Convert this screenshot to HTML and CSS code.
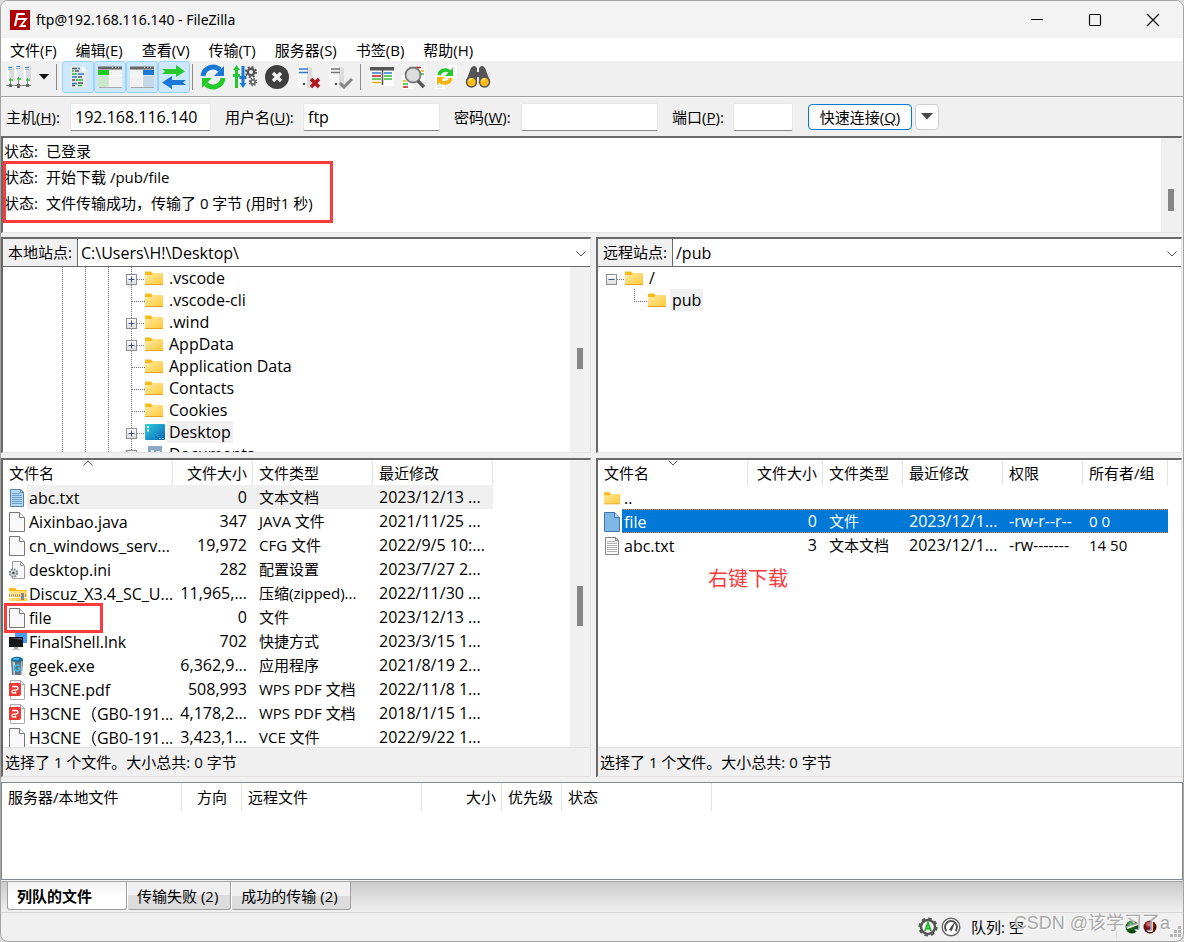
FILE: index.html
```html
<!DOCTYPE html>
<html lang="zh-CN">
<head>
<meta charset="utf-8">
<title>ftp@192.168.116.140 - FileZilla</title>
<link rel="stylesheet" href="styles.css">
</head>
<body>
<svg class="defs" aria-hidden="true">
  <defs>
    <linearGradient id="gFolder" x1="0" y1="0" x2="1" y2="1"><stop offset="0" stop-color="#ffe9a2"/><stop offset="1" stop-color="#ffc937"/></linearGradient>
    <linearGradient id="gDesk" x1="0" y1="0" x2="1" y2="1"><stop offset="0" stop-color="#2fd0dc"/><stop offset="1" stop-color="#0a62b8"/></linearGradient>
    <linearGradient id="gBox" x1="0" y1="0" x2="0" y2="1"><stop offset="0" stop-color="#fff"/><stop offset="1" stop-color="#dcdcdc"/></linearGradient>
    <linearGradient id="gSrv" x1="0" y1="0" x2="1" y2="0"><stop offset="0" stop-color="#f8f8f8"/><stop offset="1" stop-color="#cfcfcf"/></linearGradient>
    <radialGradient id="gGreen" cx=".4" cy=".3" r=".7"><stop offset="0" stop-color="#8fc98f"/><stop offset=".4" stop-color="#1c6b1c"/><stop offset="1" stop-color="#063806"/></radialGradient>
    <radialGradient id="gRed" cx=".4" cy=".3" r=".7"><stop offset="0" stop-color="#d99"/><stop offset=".4" stop-color="#7d1212"/><stop offset="1" stop-color="#3d0404"/></radialGradient>
  </defs>
  <symbol id="folder" viewBox="0 0 20 16"><path d="M0 2.500q0-1 1-1h5l1.500 2H17q1 0 1 1V8H0z" fill="#fbb917"/><path d="M0 5h6.500L8 3.500H18v11H0z" fill="url(#gFolder)"/><path d="M0 14.500h18" stroke="#e6a51c"/></symbol>
  <symbol id="desktop" viewBox="0 0 20 16"><rect width="20" height="16" rx="1" fill="url(#gDesk)"/><path d="M2 2h2v2H2zM2 5.500h2v2H2z" fill="#e6ffff"/><path d="M14 14.500h1.500M17 14.500h1.500" stroke="#bfe8ff"/></symbol>
  <symbol id="docs" viewBox="0 0 20 16"><path d="M3 0h14v16H3z" fill="#8fa8c8"/><path d="M6 4h3v9H6zM11 5h4v2h-4z" fill="#e8eef6"/></symbol>
  <symbol id="plus" viewBox="0 0 19 22"><path d="M5.500 0V7M5.500 18v4" stroke="#777" stroke-dasharray="1 1"/><path d="M11 12.500h8" stroke="#777" stroke-dasharray="1 1"/><rect x=".5" y="7.500" width="10" height="10" fill="url(#gBox)" stroke="#8e8e8e"/><path d="M2.500 12.500h6M5.500 9.500v6" stroke="#3d5594"/></symbol>
  <symbol id="minus" viewBox="0 0 19 22"><path d="M11 12.500h8" stroke="#777" stroke-dasharray="1 1"/><rect x=".5" y="7.500" width="10" height="10" fill="url(#gBox)" stroke="#8e8e8e"/><path d="M2.500 12.500h6" stroke="#3d5594"/></symbol>
  <symbol id="leaf" viewBox="0 0 19 22"><path d="M5.500 0V22M6 12.500h13" stroke="#777" stroke-dasharray="1 1"/></symbol>
  <symbol id="last" viewBox="0 0 19 22"><path d="M5.500 0V12M5 12.500h14" stroke="#777" stroke-dasharray="1 1"/></symbol>
  <symbol id="file" viewBox="0 0 18 20"><path d="M.5.500h10l5 5V19.500H.5z" fill="#f9f9f9" stroke="#777"/><path d="M10.500.500v5h5" fill="#fff" stroke="#777"/></symbol>
  <symbol id="filesel" viewBox="0 0 18 20"><path d="M.5.500h10l5 5V19.500H.5z" fill="#7fb7e6" stroke="#3c78b0"/><path d="M10.500.500v5h5" fill="#b5d8f5" stroke="#3c78b0"/></symbol>
  <symbol id="text" viewBox="0 0 18 20"><path d="M1.500 1.500h10l3 3V18.500h-13z" fill="#fafafa" stroke="#858585"/><path d="M11.500 1.500v3h3" fill="none" stroke="#858585"/><path d="M3 5.500h8M3 7.500h10M3 9.500h10M3 11.500h10M3 13.500h10M3 15.500h10" stroke="#b0b0b0"/></symbol>
  <symbol id="textsel" viewBox="0 0 18 20"><path d="M1.500 1.500h10l3 3V18.500h-13z" fill="#b5d8f5" stroke="#5383ad"/><path d="M11.500 1.500v3h3" fill="none" stroke="#5383ad"/><path d="M3 5.500h8M3 7.500h10M3 9.500h10M3 11.500h10M3 13.500h10M3 15.500h10" stroke="#6a9fcc"/></symbol>
  <symbol id="ini" viewBox="0 0 18 20"><path d="M3.500 1.500h8l4 4v13h-12z" fill="#f8f8f8" stroke="#999"/><path d="M11.500 1.500v4h4" fill="none" stroke="#999"/><circle cx="4.500" cy="13" r="3.600" fill="#dfe5ea" stroke="#77838d" stroke-width="2" stroke-dasharray="1.900 .9"/><circle cx="4.500" cy="13" r="2.800" fill="#cfd8df"/><circle cx="4.500" cy="13" r="1.300" fill="#444"/></symbol>
  <symbol id="zip" viewBox="0 0 18 20"><path d="M0 4h6l2 2h10v4H0z" fill="#fbb917"/><path d="M0 7h18v10H0z" fill="url(#gFolder)"/><path d="M0 11.500h18" stroke="#8c8c8c" stroke-width="2" stroke-dasharray="1 1"/><path d="M0 13.500h18" stroke="#f4f4f4"/><path d="M12 9h3v7h-3z" fill="#808894"/></symbol>
  <symbol id="shell" viewBox="0 0 18 20"><path d="M6 1h12v10H6z" fill="#4a9bf0"/><path d="M0 5h14v10H0z" fill="#16181b"/><path d="M1 6h12v2z" fill="#4b5057"/><path d="M5 15h4v2H5z" fill="#aaa"/><path d="M3 17.500h8" stroke="#ccc"/></symbol>
  <symbol id="geek" viewBox="0 0 18 20"><path d="M2 4h12l-1 15H3z" fill="#66737f"/><path d="M3.500 5h2.500v14H4.500z" fill="#c3ccd3"/><path d="M12 5h1.500l-.5 14h-1.500z" fill="#aab4bc"/><ellipse cx="8" cy="3.500" rx="6" ry="2.800" fill="#1d6f9c"/><path d="M4 2h6v2H4z" fill="#38b2e5"/><path d="M10.500 10a3 3 0 1 0 0 4v-2H8.500" fill="none" stroke="#30c2f5" stroke-width="1.500"/></symbol>
  <symbol id="pdf" viewBox="0 0 18 20"><path d="M1.500.500h10l4 4v15h-14z" fill="#fdfdfd" stroke="#aab"/><path d="M11.500.500v4h4" fill="none" stroke="#aab"/><rect x="-1" y="3" width="13" height="13" rx="2" fill="#ee3a35"/><path d="M3 6.500h4a1.800 1.800 0 0 1 0 3.600H4.500a1.500 1.500 0 0 0 0 3H6.500V11.500" fill="none" stroke="#fff" stroke-width="1.400"/></symbol>
  <symbol id="chev" viewBox="0 0 10 6"><path d="M.5.500L5 5 9.500.500" fill="none" stroke="#555"/></symbol>
</svg>

<div class="window">
  <header class="titlebar">
    <svg class="logo" width="20" height="20" viewBox="0 0 20 20"><rect width="20" height="20" fill="#b40000"/><rect x=".5" y=".5" width="19" height="19" fill="none" stroke="#7d0a0a" stroke-dasharray="1.500 1.500"/><path d="M5 16L7.500 4H15M6.500 9H12" fill="none" stroke="#fff" stroke-width="2.200"/><path d="M10 9h6l-5.500 7H16" fill="none" stroke="#fff" stroke-width="1.800"/></svg>
    <h1>ftp@192.168.116.140 - FileZilla</h1>
    <div class="winbtns">
      <button aria-label="最小化"><svg width="14" height="14"><path d="M1 6.500h12" stroke="#111"/></svg></button>
      <button aria-label="最大化"><svg width="14" height="14"><rect x="1.500" y="1.500" width="11" height="11" rx="1" fill="none" stroke="#111" stroke-width="1.200"/></svg></button>
      <button aria-label="关闭"><svg width="14" height="14"><path d="M1 1l12 12M13 1L1 13" stroke="#111" stroke-width="1.200"/></svg></button>
    </div>
  </header>

  <nav class="menubar">
    <button>文件(F)</button><button>编辑(E)</button><button>查看(V)</button><button>传输(T)</button><button>服务器(S)</button><button>书签(B)</button><button>帮助(H)</button>
  </nav>

  <div class="toolbar">
    <button class="tool" aria-label="站点管理器"><svg width="26" height="24" viewBox="0 0 26 24"><path d="M1 1h7v15H1z" fill="#d9dbdd"/><path d="M9 0h8v15H9z" fill="#e2e4e6"/><path d="M18 1h7v15h-7z" fill="#d9dbdd"/><path d="M1 1h2v15H1zM9 0h2v15H9zM18 1h2v15h-2z" fill="#fafafa"/><path d="M2 2.500h4M10 1.500h4M19 2.500h4" stroke="#3d86c9"/><path d="M2 4.500h4M10 3.500h4M19 4.500h4" stroke="#8db6dc"/><path d="M4.500 13v7M12.500 12v9M21.500 13v7M0 20.500h25" stroke="#888"/><path d="M3 15h4M11 14h4M20 15h4" stroke="#32c23a" stroke-width="1.500"/><path d="M3 19h3v3H3zM11 19h3v4h-3zM20 19h3v3h-3z" fill="#666"/></svg></button>
    <button class="drop" aria-label="站点列表"><svg width="10" height="6"><path d="M0 0h10L5 5.500z" fill="#111"/></svg></button>
    <i class="sep"></i>
    <button class="tool on" aria-label="消息日志"><svg width="24" height="24" viewBox="0 0 24 24"><path d="M4 1h12l5 5v17H4z" fill="#e3e8ec"/><path d="M16 1v5h5z" fill="#fff"/><g stroke-width="1.400"><path d="M6 3.500h5M9 6h4M6 15h3M12 12h4" stroke="#555"/><path d="M12 3.500h2M6 12h5M12 9h6M6 18.500h5" stroke="#2c7ad0"/><path d="M6 6h2M6 9h5M10 15h7M12 20.500h4" stroke="#30bd38"/><path d="M12 18h5M6 20.500h3" stroke="#555"/></g></svg></button>
    <button class="tool on" aria-label="本地目录树"><svg width="25" height="24" viewBox="0 0 25 24"><path d="M0 2h24v20H0z" fill="#f1f1f1"/><path d="M0 1.500h24v3H0z" fill="#666"/><path d="M14 2.500h1M17 2.500h1M20 2.500h1" stroke="#ddd"/><path d="M0 5h11v5H0z" fill="#19cb21"/><path d="M0 10.500h11V22H0z" fill="#cbe6cd"/><path d="M11.500 5v17M12 10.500h12" stroke="#fff"/><path d="M1 22.500h23" stroke="#aaa"/></svg></button>
    <button class="tool on" aria-label="远程目录树"><svg width="25" height="24" viewBox="0 0 25 24"><path d="M0 2h24v20H0z" fill="#f1f1f1"/><path d="M0 1.500h24v3H0z" fill="#666"/><path d="M14 2.500h1M17 2.500h1M20 2.500h1" stroke="#ddd"/><path d="M13 5h11v5H13z" fill="#1b78d4"/><path d="M13 10.500h11V22H13z" fill="#c7d8e9"/><path d="M12.500 5v17M0 10.500h12" stroke="#fff"/><path d="M1 22.500h23" stroke="#aaa"/></svg></button>
    <button class="tool on" aria-label="传输队列"><svg width="26" height="24" viewBox="0 0 26 24"><path d="M1 4h14V0l9 6.500L15 12V9H1l3-2.500z" fill="#25c92b"/><path d="M25 15H11v-4l-10 6.500L11 24v-4h14l-3-2.500z" fill="#1b78d4"/></svg></button>
    <i class="sep near"></i>
    <button class="tool" aria-label="刷新"><svg width="26" height="26" viewBox="0 0 26 26"><path d="M3 12a10 10 0 0 1 17-6" fill="none" stroke="#1b78d4" stroke-width="5"/><path d="M24 2v10H14z" fill="#1b78d4"/><path d="M23 14a10 10 0 0 1-17 6" fill="none" stroke="#25c92b" stroke-width="5"/><path d="M2 24V14h10z" fill="#25c92b"/></svg></button>
    <button class="tool" aria-label="处理队列"><svg width="26" height="26" viewBox="0 0 26 26"><path d="M4.500 1L8 6H6v4h2v3H6v11H3V13H1v-3h2V6H1z" fill="#25c92b"/><path d="M11 24l-3.500-5h2v-4h-2v-3h2V2h3v10h2v3h-2v4h2z" fill="#1b78d4"/><circle cx="19" cy="8" r="3.200" fill="none" stroke="#555" stroke-width="2.400"/><circle cx="19" cy="8" r="5" fill="none" stroke="#555" stroke-width="2" stroke-dasharray="2 1.930"/><circle cx="21" cy="18" r="2.200" fill="none" stroke="#666" stroke-width="1.800"/><circle cx="21" cy="18" r="3.600" fill="none" stroke="#666" stroke-width="1.400" stroke-dasharray="1.400 1.430"/></svg></button>
    <button class="tool" aria-label="取消"><svg width="26" height="26" viewBox="0 0 26 26"><circle cx="13" cy="13" r="12" fill="#3f3f3f"/><path d="M9 9l8 8M17 9l-8 8" stroke="#f3f3f3" stroke-width="3.400"/></svg></button>
    <button class="tool" aria-label="断开"><svg width="24" height="24" viewBox="0 0 24 24"><path d="M0 1h10l5 2v20H0z" fill="#dcdcdc"/><path d="M0 1h10v22H0z" fill="#f6f6f6"/><path d="M2 4h9M2 7.500h9" stroke="#2c7ad0" stroke-width="1.500"/><circle cx="7" cy="19" r="1.300" fill="#555"/><path d="M14 14l8 8M22 14l-8 8" stroke="#b4161c" stroke-width="3.500"/></svg></button>
    <button class="tool" aria-label="重新连接"><svg width="24" height="24" viewBox="0 0 24 24"><path d="M0 1h10l5 2v20H0z" fill="#dcdcdc"/><path d="M0 1h10v22H0z" fill="#f6f6f6"/><path d="M2 4h9M2 7.500h9" stroke="#777" stroke-width="1.500"/><circle cx="7" cy="19" r="1.300" fill="#555"/><path d="M11 18l4 4 8-8" fill="none" stroke="#858585" stroke-width="3"/></svg></button>
    <i class="sep"></i>
    <button class="tool" aria-label="文件名过滤"><svg width="25" height="24" viewBox="0 0 25 24"><path d="M1 3h23v18H1z" fill="#fafafa"/><path d="M0 2h24v3.500H0z" fill="#555"/><path d="M12.500 3v17" stroke="#555" stroke-width="1.500"/><g stroke-width="1.500"><path d="M2 8h9M14 8h8" stroke="#2c7ad0"/><path d="M2 11h9" stroke="#c4161c"/><path d="M14 11h8M2 14h9M14 14h8" stroke="#30bd38"/><path d="M2 17.500h9" stroke="#f0b400"/></g></svg></button>
    <button class="tool" aria-label="目录比较"><svg width="26" height="26" viewBox="0 0 26 26"><path d="M13 1h11v15H13zM1 11h12v14H1z" fill="#fafafa"/><path d="M14 3.500h6" stroke="#c4161c" stroke-width="1.500"/><path d="M20 7h3M2 17h3" stroke="#f0b400" stroke-width="1.500"/><path d="M20 10h3M2 20h5" stroke="#30bd38" stroke-width="1.500"/><path d="M2 23h5" stroke="#c4161c" stroke-width="1.500"/><circle cx="12" cy="11" r="7.500" fill="#dcdcdc" stroke="#777" stroke-width="1.800"/><path d="M17 17l6 6" stroke="#555" stroke-width="3.200"/></svg></button>
    <button class="tool" aria-label="同步浏览"><svg width="26" height="26" viewBox="0 0 26 26"><path d="M15 1h9v14h-9zM2 12h10v13H2z" fill="#fff"/><path d="M4 20h5M4 23h5M18 4h4" stroke="#ccc"/><path d="M6 11a6.500 6.500 0 0 1 11-3" fill="none" stroke="#25c92b" stroke-width="3.600"/><path d="M20 4v8h-8z" fill="#25c92b"/><path d="M18 14a6.500 6.500 0 0 1-11 3" fill="none" stroke="#f5b40c" stroke-width="3.600"/><path d="M4 21v-8h8z" fill="#f5b40c"/></svg></button>
    <button class="tool" aria-label="搜索"><svg width="26" height="26" viewBox="0 0 26 26"><path d="M6 4q3-4 6 0v4h2V4q3-4 6 0l5 13H14v-4h-2v4H1z" fill="#555"/><circle cx="6.500" cy="18" r="5" fill="#ffb90f" stroke="#555" stroke-width="1.500"/><circle cx="19.500" cy="18" r="5" fill="#ffb90f" stroke="#555" stroke-width="1.500"/><path d="M4 17q1-2 3-2M17 17q1-2 3-2" fill="none" stroke="#ffec9e" stroke-width="1.500"/></svg></button>
  </div>

  <form class="quick">
    <label class="l1" for="host">主机(<u>H</u>):</label><input class="f1" id="host" type="text" value="192.168.116.140">
    <label class="l2" for="user">用户名(<u>U</u>):</label><input class="f2" id="user" type="text" value="ftp">
    <label class="l3" for="pass">密码(<u>W</u>):</label><input class="f2" id="pass" type="password">
    <label class="l4" for="port">端口(<u>P</u>):</label><input class="f3" id="port" type="text">
    <button class="connect" type="button">快速连接(<u>Q</u>)</button>
    <button class="more" type="button" aria-label="历史记录"><svg width="12" height="7"><path d="M0 0h12L6 6.500z" fill="#484848"/></svg></button>
  </form>

  <section class="frame log">
    <div class="log-lines">
      <p><span>状态:</span>已登录</p>
      <p><span>状态:</span>开始下载 /pub/file</p>
      <p><span>状态:</span>文件传输成功，传输了 0 字节 (用时1 秒)</p>
      <div class="mark mark-log"></div>
    </div>
    <div class="scroll"><i class="thumb t1"></i></div>
  </section>

  <div class="split upper">
    <section class="frame pane">
      <div class="site"><label for="lsite">本地站点:</label><select id="lsite"><option>C:\Users\H!\Desktop\</option></select><svg class="chev" width="10" height="6"><use href="#chev"/></svg></div>
      <div class="scrollwrap">
        <ul class="tree local">
          <li><i></i><i></i><i></i><svg class="node"><use href="#plus"/></svg><svg class="ico"><use href="#folder"/></svg><span>.vscode</span></li>
          <li><i></i><i></i><i></i><svg class="node"><use href="#leaf"/></svg><svg class="ico"><use href="#folder"/></svg><span>.vscode-cli</span></li>
          <li><i></i><i></i><i></i><svg class="node"><use href="#plus"/></svg><svg class="ico"><use href="#folder"/></svg><span>.wind</span></li>
          <li><i></i><i></i><i></i><svg class="node"><use href="#plus"/></svg><svg class="ico"><use href="#folder"/></svg><span>AppData</span></li>
          <li><i></i><i></i><i></i><svg class="node"><use href="#leaf"/></svg><svg class="ico"><use href="#folder"/></svg><span>Application Data</span></li>
          <li><i></i><i></i><i></i><svg class="node"><use href="#leaf"/></svg><svg class="ico"><use href="#folder"/></svg><span>Contacts</span></li>
          <li><i></i><i></i><i></i><svg class="node"><use href="#leaf"/></svg><svg class="ico"><use href="#folder"/></svg><span>Cookies</span></li>
          <li><i></i><i></i><i></i><svg class="node"><use href="#plus"/></svg><svg class="ico"><use href="#desktop"/></svg><span class="cur">Desktop</span></li>
          <li><i></i><i></i><i></i><svg class="node"><use href="#plus"/></svg><svg class="ico"><use href="#docs"/></svg><span>Documents</span></li>
        </ul>
        <div class="scroll"><i class="thumb t2"></i></div>
      </div>
    </section>
    <section class="frame pane">
      <div class="site"><label for="rsite">远程站点:</label><select id="rsite"><option>/pub</option></select><svg class="chev" width="10" height="6"><use href="#chev"/></svg></div>
      <div class="scrollwrap">
        <ul class="tree remote">
          <li><svg class="node"><use href="#minus"/></svg><svg class="ico"><use href="#folder"/></svg><span>/</span></li>
          <li class="child"><svg class="node"><use href="#last"/></svg><svg class="ico"><use href="#folder"/></svg><span class="cur">pub</span></li>
        </ul>
      </div>
    </section>
  </div>

  <div class="split lower">
    <section class="frame pane">
      <div class="scrollwrap">
        <div class="list">
          <table class="files tl">
            <colgroup><col class="w170"><col class="w80"><col class="w120"><col class="w120"></colgroup>
            <thead><tr><th>文件名<svg class="sort" width="10" height="6" viewBox="0 0 10 6"><path d="M.5 5.500L5 1l4.500 4.500" fill="none" stroke="#666"/></svg></th><th class="r">文件大小</th><th>文件类型</th><th>最近修改</th></tr></thead>
            <tbody>
              <tr class="dim"><td><svg class="fi"><use href="#textsel"/></svg><b>abc.txt</b></td><td class="r n">0</td><td>文本文档</td><td class="n">2023/12/13 ...</td></tr>
              <tr><td><svg class="fi"><use href="#file"/></svg><b>Aixinbao.java</b></td><td class="r n">347</td><td>JAVA 文件</td><td class="n">2021/11/25 ...</td></tr>
              <tr><td><svg class="fi"><use href="#file"/></svg><b>cn_windows_serv...</b></td><td class="r n">19,972</td><td>CFG 文件</td><td class="n">2022/9/5 10:...</td></tr>
              <tr><td><svg class="fi"><use href="#ini"/></svg><b>desktop.ini</b></td><td class="r n">282</td><td>配置设置</td><td class="n">2023/7/27 2...</td></tr>
              <tr><td><svg class="fi"><use href="#zip"/></svg><b>Discuz_X3.4_SC_U...</b></td><td class="r n">11,965,...</td><td>压缩(zipped)...</td><td class="n">2022/11/30 ...</td></tr>
              <tr><td><svg class="fi"><use href="#file"/></svg><b>file</b></td><td class="r n">0</td><td>文件</td><td class="n">2023/12/13 ...</td></tr>
              <tr><td><svg class="fi"><use href="#shell"/></svg><b>FinalShell.lnk</b></td><td class="r n">702</td><td>快捷方式</td><td class="n">2023/3/15 1...</td></tr>
              <tr><td><svg class="fi"><use href="#geek"/></svg><b>geek.exe</b></td><td class="r n">6,362,9...</td><td>应用程序</td><td class="n">2021/8/19 2...</td></tr>
              <tr><td><svg class="fi"><use href="#pdf"/></svg><b>H3CNE.pdf</b></td><td class="r n">508,993</td><td>WPS PDF 文档</td><td class="n">2022/11/8 1...</td></tr>
              <tr><td><svg class="fi"><use href="#pdf"/></svg><b>H3CNE（GB0-191...</b></td><td class="r n">4,178,2...</td><td>WPS PDF 文档</td><td class="n">2018/1/15 1...</td></tr>
              <tr><td><svg class="fi"><use href="#file"/></svg><b>H3CNE（GB0-191...</b></td><td class="r n">3,423,1...</td><td>VCE 文件</td><td class="n">2022/9/22 1...</td></tr>
            </tbody>
          </table>
          <div class="mark mark-file"></div>
        </div>
        <div class="scroll"><i class="thumb t3"></i></div>
      </div>
      <div class="summary">选择了 1 个文件。大小总共: 0 字节</div>
    </section>
    <section class="frame pane">
      <div class="scrollwrap">
        <div class="list">
          <table class="files tr">
            <colgroup><col class="w150"><col class="w75"><col class="w80"><col class="w100"><col class="w80"><col class="w85"></colgroup>
            <thead><tr><th>文件名<svg class="sort" width="10" height="6"><use href="#chev"/></svg></th><th class="r">文件大小</th><th>文件类型</th><th>最近修改</th><th>权限</th><th>所有者/组</th></tr></thead>
            <tbody>
              <tr><td><svg class="fi"><use href="#folder"/></svg><b>..</b></td><td></td><td></td><td></td><td></td><td></td></tr>
              <tr class="sel"><td><svg class="fi"><use href="#filesel"/></svg><b>file</b></td><td class="r n">0</td><td>文件</td><td class="n">2023/12/1...</td><td class="n">-rw-r--r--</td><td>0 0</td></tr>
              <tr><td><svg class="fi"><use href="#text"/></svg><b>abc.txt</b></td><td class="r n">3</td><td>文本文档</td><td class="n">2023/12/1...</td><td class="n">-rw-------</td><td>14 50</td></tr>
            </tbody>
          </table>
          <p class="note">右键下载</p>
        </div>
      </div>
      <div class="summary">选择了 1 个文件。大小总共: 0 字节</div>
    </section>
  </div>

  <section class="queue">
    <table class="files tq">
      <colgroup><col class="w180"><col class="w60"><col class="w180"><col class="w80"><col class="w60"><col class="w150"></colgroup>
      <thead><tr><th>服务器/本地文件</th><th class="c">方向</th><th>远程文件</th><th class="r">大小</th><th>优先级</th><th>状态</th></tr></thead>
    </table>
  </section>

  <div class="tabs"><button class="tab active">列队的文件</button><button class="tab">传输失败 (2)</button><button class="tab">成功的传输 (2)</button></div>

  <footer class="status">
    <svg width="20" height="20" viewBox="0 0 20 20"><circle cx="10" cy="10" r="7" fill="#fff" stroke="#555" stroke-width="2.500"/><circle cx="10" cy="10" r="8.600" fill="none" stroke="#555" stroke-width="2" stroke-dasharray="3.500 3.250"/><path d="M7 14l3-8 3 8M8 11.500h4" fill="none" stroke="#21b52a" stroke-width="2"/></svg>
    <svg width="20" height="20" viewBox="0 0 20 20"><circle cx="10" cy="10" r="8.800" fill="#fff" stroke="#666" stroke-width="1.400"/><path d="M5.500 14a6 6 0 1 1 9 0" fill="none" stroke="#555" stroke-width="2"/><path d="M8.500 12.500L13 6.500l-2.500 7z" fill="#444" stroke="#444"/></svg>
    <span class="qtext">队列: 空</span>
    <i class="vsep"></i>
    <svg class="led" width="14" height="14" viewBox="0 0 14 14"><circle cx="7" cy="7" r="6.500" fill="url(#gGreen)"/></svg>
    <svg class="led" width="14" height="14" viewBox="0 0 14 14"><circle cx="7" cy="7" r="6.500" fill="url(#gRed)"/></svg>
    <svg class="grip" width="12" height="12" viewBox="0 0 12 12"><path d="M8 0h3v3H8zM4 4h3v3H4zM8 4h3v3H8zM0 8h3v3H0zM4 8h3v3H4zM8 8h3v3H8z" fill="#b4b4b4"/></svg>
    <span class="watermark">CSDN @该学习了a</span>
  </footer>
</div>
</body>
</html>
```

FILE: styles.css
```css
* { box-sizing: border-box; }
body {
  margin: 0;
  background: #dcdcdc;
  color: #000;
  font: 15px/20px "Open Sans", "Noto Sans CJK SC", sans-serif;
}
button, input, select { font: inherit; color: inherit; margin: 0; }
button { border: 0; background: none; padding: 0; white-space: nowrap; }
.defs { position: absolute; width: 0; height: 0; }

.window {
  height: 100vh;
  display: grid;
  grid-template-rows: 37px 23px 36px 39px minmax(0, 97fr) 4px minmax(0, 216fr) 5px minmax(0, 319fr) 5px minmax(0, 98fr) 33px auto;
  background: #f0f0f0;
  border: 1px solid #a3a3a3;
  border-radius: 8px;
  overflow: hidden;
}
.titlebar { grid-row: 1; display: flex; align-items: center; padding: 0 1px 0 9px; background: #f3f3f3; }
.titlebar h1 { margin: 0 0 0 6px; font-family: "Noto Sans", sans-serif; font-size: 14px; font-weight: 400; flex: 1; }
.winbtns { display: flex; }
.winbtns button { width: 58px; height: 36px; display: grid; place-items: center; }

.menubar { grid-row: 2; display: flex; background: #fff; }
.menubar button { padding: 0 10px 0 9px; line-height: 22px; }

.toolbar { grid-row: 3; display: flex; align-items: center; padding: 0 2px 3px; border-bottom: 1px solid #a0a0a0; }
.tool { width: 32px; height: 32px; display: grid; place-items: center; }
.tool.on { background: #cce8ff; border: 1px solid #99d1ff; border-radius: 3px; }
.drop { width: 18px; height: 32px; display: grid; place-items: center; }
.sep { width: 1px; height: 26px; background: #8a8a8a; margin: 0 5px 0 3px; }
.sep.near { margin: 0 4px 0 2px; }

.quick { grid-row: 4; display: flex; align-items: center; padding: 0 5px 1px; border-top: 1px solid #fff; }
.quick input { height: 28px; border: 1px solid #e6e6e6; border-bottom-color: #868686; border-radius: 2px; background: #fff; padding: 0 4px; outline: 0; font-size: 16px; }
.quick label { white-space: nowrap; }
.l1 { width: 64px; }
.l2 { width: 78px; }
.l3 { width: 67px; }
.l4 { width: 61px; }
.f1 { width: 141px; margin-right: 14px; }
.f2 { width: 137px; margin-right: 14px; }
.f3 { width: 60px; margin-right: 15px; }
.connect { width: 104px; height: 26px; border: 1px solid #0078d4; border-radius: 4px; background: #fdfdfd; }
.more { width: 24px; height: 26px; margin-left: 3px; border: 1px solid #d0d0d0; border-radius: 4px; background: #fdfdfd; display: grid; place-items: center; }

.frame { background: #fff; border: 2px solid #696969; border-right: 1px solid #e3e3e3; border-bottom: 1px solid #e3e3e3; min-width: 0; min-height: 0; overflow: hidden; }
.log { grid-row: 5; display: flex; margin-right: 1px; }
.log-lines { flex: 1; position: relative; }
.log p { margin: 0; line-height: 26px; padding-left: 1px; white-space: nowrap; }
.log p span { display: inline-block; width: 42px; }
.scroll { width: 20px; background: #f0f0f0; display: grid; justify-items: center; }
.thumb { width: 6px; background: #868686; }
.t1 { height: 22px; margin-top: 51px; }
.t2 { height: 21px; margin-top: 81px; }
.t3 { height: 40px; margin-top: 126px; }

.mark { position: absolute; border: 3px solid #fb3b3b; pointer-events: none; }
.mark-log { left: 0; top: 23px; width: 330px; height: 62px; }
.mark-file { left: 1px; top: 143px; width: 99px; height: 30px; }

.split { display: grid; grid-template-columns: 590fr 586fr; gap: 5px; min-height: 0; margin-right: 1px; }
.upper { grid-row: 7; }
.lower { grid-row: 9; }
.pane { display: flex; flex-direction: column; }
.site { display: flex; position: relative; border-bottom: 1px solid #696969; flex: none; }
.site label { padding: 0 4px 0 5px; width: 75px; line-height: 27px; background: #f0f0f0; border-right: 1px solid #696969; white-space: nowrap; }
.site select { flex: 1; min-width: 0; appearance: none; border: 0; background: #fff; padding: 0 24px 0 3px; outline: 0; font-size: 16px; }
.chev { position: absolute; right: 4px; top: 12px; }
.scrollwrap { flex: 1; min-height: 0; display: flex; overflow: hidden; }
.tree { flex: 1; margin: 0; padding: 0; list-style: none; overflow: hidden; font-size: 16px; }
.tree li { display: flex; height: 22px; align-items: center; }
.tree i { width: 23px; height: 22px; background: repeating-linear-gradient(#777 0 1px, transparent 1px 2px) 0 0 / 1px 100% no-repeat; }
.local { padding-left: 59px; }
.remote { padding-left: 8px; }
.tree .child { padding-left: 23px; }
.node { width: 19px; height: 22px; flex: none; }
.local .node { margin-left: -5px; }
.ico { width: 20px; height: 16px; flex: none; margin-right: 2px; }
.tree span { padding: 0 2px; line-height: 22px; white-space: nowrap; }
.tree .cur { background: #f0f0f0; }

.list { flex: 1; position: relative; min-width: 0; overflow: hidden; }
.files { table-layout: fixed; border-spacing: 0; }
.tl { width: 490px; }
.tr { width: 570px; }
.tq { width: 710px; }
.w60 { width: 60px; } .w75 { width: 75px; } .w80 { width: 80px; } .w85 { width: 85px; }
.w100 { width: 100px; } .w120 { width: 120px; } .w150 { width: 150px; } .w170 { width: 170px; } .w180 { width: 180px; }
.files th { height: 25px; padding: 0 5px 0 6px; font-weight: 400; text-align: left; border-right: 1px solid #e3e3e3; white-space: nowrap; position: relative; }
.tq th { height: 28px; }
.files td { height: 24px; padding: 0 6px; white-space: nowrap; }
.files td:first-child { padding-right: 0; }
.files b { font-weight: 400; font-size: 16px; vertical-align: middle; }
.files .n { font-size: 16px; }
.files .r { text-align: right; }
.files .c { text-align: center; }
.sort { position: absolute; left: 50%; top: 0; margin-left: -5px; }
.fi { width: 18px; height: 20px; margin-right: 2px; vertical-align: middle; overflow: visible; }
.fi use { overflow: visible; }
.dim { background: linear-gradient(#f0f0f0, #f0f0f0) 24px 0 no-repeat; }
.sel {
  color: #fff;
  background:
    repeating-linear-gradient(90deg, #ff8728 0 1px, #0078d7 1px 2px) 24px 0 / 100% 1px no-repeat,
    repeating-linear-gradient(90deg, #ff8728 0 1px, #0078d7 1px 2px) 24px 100% / 100% 1px no-repeat,
    linear-gradient(#0078d7, #0078d7) 24px 0 no-repeat;
}
.note { position: absolute; left: 110px; top: 106px; margin: 0; font-size: 20px; line-height: 26px; color: #fb3b3b; }
.summary { flex: none; background: #f0f0f0; border-top: 1px solid #e0e0e0; line-height: 28px; padding-left: 2px; white-space: nowrap; }

.queue { grid-row: 11; background: #fff; border: 1px solid #828790; overflow: hidden; }
.tabs { grid-row: 12; display: flex; align-items: flex-start; padding-left: 6px; margin-top: 1px; border-top: 1px solid #a8a8a8; border-bottom: 1px solid #d7d7d7; background: linear-gradient(#cacaca, #f0f0f0); }
.tab { height: 28px; padding: 0 12px 0 9px; border: 1px solid #a0a0a0; border-top: 0; border-left-color: #fff; border-radius: 0 0 3px 3px; background: linear-gradient(#f0f0f0 50%, #dcdcdc 50%); }
.active { width: 120px; background: linear-gradient(#f0f0f0, #fff 50%); font-weight: 700; text-align: left; border-left-color: #a0a0a0; }
.status { grid-row: 13; position: relative; height: 28px; display: flex; align-items: center; justify-content: flex-end; }
.status > svg { margin-right: 3px; }
.qtext { width: 145px; margin-left: 7px; line-height: 27px; }
.vsep { width: 1px; height: 24px; background: #d5d5d5; margin-right: 8px; }
.status .led { margin-right: 4px; }
.status > .grip { margin: 10px 1px 0 9px; }
.watermark { position: absolute; right: 13px; top: -2px; font-size: 18px; line-height: 24px; color: #a9a9a9; text-shadow: 1px 1px 0 #fff; font-family: "Liberation Sans", "Noto Sans CJK SC", sans-serif; }
```
